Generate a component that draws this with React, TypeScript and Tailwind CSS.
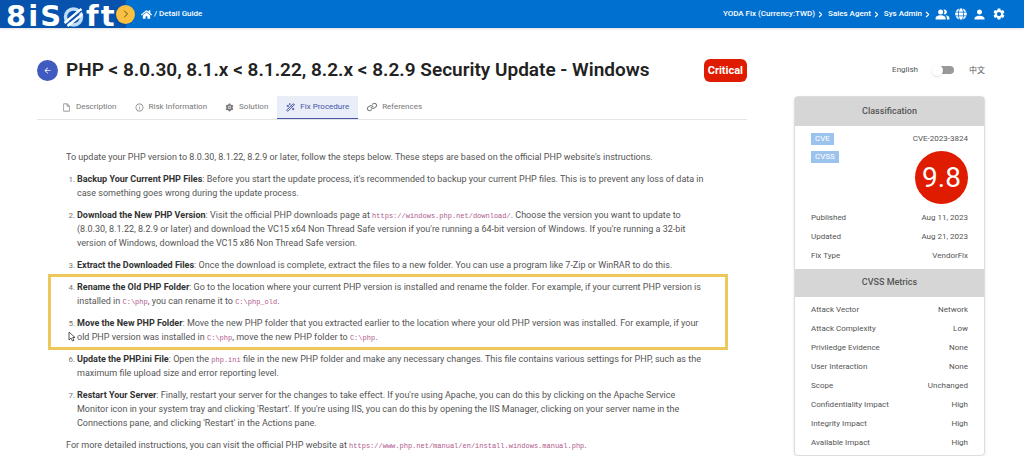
import { useState } from 'react';
import type { ReactNode } from 'react';
import { AiFillSetting, AiOutlineFile, AiOutlineInfoCircle } from 'react-icons/ai';
import { FaGlobe, FaHome } from 'react-icons/fa';
import { MdArrowBack, MdPeopleAlt, MdPerson, MdSettings } from 'react-icons/md';
import { ChevronRight, Link, WandSparkles } from 'lucide-react';

const tabs = [
  { label: 'Description', icon: <AiOutlineFile size={9} /> },
  { label: 'Risk Information', icon: <AiOutlineInfoCircle size={9} /> },
  { label: 'Solution', icon: <AiFillSetting size={9} /> },
  { label: 'Fix Procedure', icon: <WandSparkles size={9} strokeWidth={2.5} /> },
  { label: 'References', icon: <Link size={10} strokeWidth={2.5} className="rotate-12" /> },
];

const metrics = [
  ['Attack Vector', 'Network'],
  ['Attack Complexity', 'Low'],
  ['Priviledge Evidence', 'None'],
  ['User Interaction', 'None'],
  ['Scope', 'Unchanged'],
  ['Confidentiality Impact', 'High'],
  ['Integrity Impact', 'High'],
  ['Available Impact', 'High'],
];

function Code({ children }: { children: ReactNode }) {
  return <code className="font-['Liberation_Mono',monospace] text-[7px] leading-none text-[#b0588a]">{children}</code>;
}

function Step({ title, children }: { title: string; children: ReactNode }) {
  return (
    <li>
      <strong className="font-bold text-[#333]">{title}</strong>: {children}
    </li>
  );
}

function Logo() {
  return (
    <div className="flex items-center gap-[2px] pt-1 pl-1.5 font-['DejaVu_Sans',sans-serif] text-[29px] leading-6 font-bold text-white">
      <span>8</span>
      <span>i</span>
      <span>S</span>
      <svg width="21" height="20" viewBox="0 0 20 20" className="mt-0.5">
        <circle cx="10" cy="10" r="8" fill="none" stroke="#bcdcf7" strokeWidth="3.5" />
        <path d="M1 16 18 2M4 19 19 7" stroke="#fff" strokeWidth="2.5" />
        <path d="M2 18 18 4" stroke="#0b58b0" strokeWidth="1.2" />
      </svg>
      <span>f</span>
      <span>t</span>
    </div>
  );
}

function Header() {
  return (
    <header className="flex h-7 items-center bg-[#0070d0] text-[8px] font-medium text-white shadow">
      <div className="flex h-7 w-[126px] items-center bg-[#0752ac]">
        <Logo />
      </div>
      <button aria-label="Expand menu" className="z-10 -ml-[10px] flex size-[19px] items-center justify-center rounded-full bg-[#fbc040] text-[#5a4a20] shadow">
        <ChevronRight size={12} />
      </button>
      <nav className="ml-1.5 flex items-center gap-[2px]">
        <a href="#" aria-label="Home">
          <FaHome size={11} />
        </a>
        <span>/ Detail Guide</span>
      </nav>
      <div className="mr-[18px] ml-auto flex items-center gap-[3px]">
        {['YODA Fix (Currency:TWD)', 'Sales Agent', 'Sys Admin'].map((item) => (
          <button key={item} className="flex items-center gap-px">
            {item}
            <ChevronRight size={9} strokeWidth={3} />
          </button>
        ))}
        <div className="flex items-center gap-[5px]">
          <button aria-label="Users"><MdPeopleAlt size={15} /></button>
          <button aria-label="Language"><FaGlobe size={12} /></button>
          <button aria-label="Account"><MdPerson size={15} /></button>
          <button aria-label="Settings"><MdSettings size={14} /></button>
        </div>
      </div>
    </header>
  );
}

function Row({ label, value }: { label: string; value: string }) {
  return (
    <div className="flex h-[19px] items-center justify-between">
      <dt>{label}</dt>
      <dd>{value}</dd>
    </div>
  );
}

function Sidebar() {
  const [chinese, setChinese] = useState(false);

  return (
    <aside className="w-[191px] shrink-0 text-[8px] text-[#555]">
      <div className="flex h-6 items-center justify-end">
        <span>English</span>
        <label className="ml-[14px] flex cursor-pointer items-center">
          <input
            type="checkbox"
            role="switch"
            aria-label="Switch language"
            checked={chinese}
            onChange={(e) => setChinese(e.target.checked)}
            className="peer sr-only"
          />
          <span className="flex h-2 w-[22px] items-center rounded-full bg-linear-to-r from-transparent from-25% to-[#999] to-25% peer-checked:justify-end">
            <span className="size-[11px] rounded-full bg-white shadow" />
          </span>
        </label>
        <span className="ml-[15px] font-['Noto_Sans_CJK_TC',sans-serif]">中文</span>
      </div>

      <section className="mt-[14px] rounded-sm border border-[#ddd] shadow-sm">
        <h2 className="flex h-[29px] items-center justify-center bg-[#d6d6d6] text-[9px] font-medium">Classification</h2>
        <dl className="px-4 pt-[3px] pb-1">
          <div className="flex h-[19px] items-center justify-between">
            <dt className="bg-[#9cc3ee] px-1 leading-3 text-white">CVE</dt>
            <dd>CVE-2023-3824</dd>
          </div>
          <div className="flex items-start justify-between pt-[3px] pb-1">
            <dt className="bg-[#9cc3ee] px-1 leading-3 text-white">CVSS</dt>
            <dd className="flex size-[53px] items-center justify-center rounded-full bg-[#e01c00] text-[28px] text-white">9.8</dd>
          </div>
          <Row label="Published" value="Aug 11, 2023" />
          <Row label="Updated" value="Aug 21, 2023" />
          <Row label="Fix Type" value="VendorFix" />
        </dl>
        <h2 className="flex h-7 items-center justify-center bg-[#d6d6d6] text-[9px] font-medium">CVSS Metrics</h2>
        <dl className="px-4 py-[3px]">
          {metrics.map(([label, value]) => (
            <Row key={label} label={label} value={value} />
          ))}
        </dl>
      </section>
    </aside>
  );
}

function Procedure() {
  const list = 'list-decimal space-y-2 pl-[11px] marker:text-[8px] marker:text-[#777]';

  return (
    <article className="space-y-2 pr-10 pl-[29px] text-[9px] leading-[14px] text-[#555]">
      <p>
        To update your PHP version to 8.0.30, 8.1.22, 8.2.9 or later, follow the steps below. These steps are based on the
        official PHP website's instructions.
      </p>
      <ol className={list}>
        <Step title="Backup Your Current PHP Files">
          Before you start the update process, it's recommended to backup your current PHP files. This is to prevent any
          loss of data in case something goes wrong during the update process.
        </Step>
        <Step title="Download the New PHP Version">
          Visit the official PHP downloads page at <Code>https://windows.php.net/download/</Code>. Choose the version you
          want to update to (8.0.30, 8.1.22, 8.2.9 or later) and download the VC15 x64 Non Thread Safe version if you're
          running a 64-bit version of Windows. If you're running a 32-bit version of Windows, download the VC15 x86 Non
          Thread Safe version.
        </Step>
        <Step title="Extract the Downloaded Files">
          Once the download is complete, extract the files to a new folder. You can use a program like 7-Zip or WinRAR to
          do this.
        </Step>
      </ol>
      <div className="relative">
        <ol start={4} className={list}>
          <Step title="Rename the Old PHP Folder">
            Go to the location where your current PHP version is installed and rename the folder. For example, if your
            current PHP version is installed in <Code>C:\php</Code>, you can rename it to <Code>C:\php_old</Code>.
          </Step>
          <Step title="Move the New PHP Folder">
            Move the new PHP folder that you extracted earlier to the location where your old PHP version was installed.
            For example, if your old PHP version was installed in <Code>C:\php</Code>, move the new PHP folder to{' '}
            <Code>C:\php</Code>.
          </Step>
        </ol>
        <div className="pointer-events-none absolute -top-1.5 -right-[21px] -bottom-1.5 -left-[18px] border-3 border-[#edc75b]" />
        <svg width="8" height="11" viewBox="0 0 8 11" className="absolute bottom-0.5 left-0.5">
          <path d="M1 1v8l2-2 1.500 3 1.500-.7L4.700 6.500H7z" fill="#fff" stroke="#444" strokeWidth="0.9" />
        </svg>
      </div>
      <ol start={6} className={list}>
        <Step title="Update the PHP.ini File">
          Open the <Code>php.ini</Code> file in the new PHP folder and make any necessary changes. This file contains
          various settings for PHP, such as the maximum file upload size and error reporting level.
        </Step>
        <Step title="Restart Your Server">
          Finally, restart your server for the changes to take effect. If you're using Apache, you can do this by clicking
          on the Apache Service Monitor icon in your system tray and clicking 'Restart'. If you're using IIS, you can do
          this by opening the IIS Manager, clicking on your server name in the Connections pane, and clicking 'Restart' in
          the Actions pane.
        </Step>
      </ol>
      <p>
        For more detailed instructions, you can visit the official PHP website at{' '}
        <Code>https://www.php.net/manual/en/install.windows.manual.php</Code>.
      </p>
    </article>
  );
}

export default function App() {
  const [active, setActive] = useState('Fix Procedure');

  return (
    <div className="bg-white font-[Roboto,sans-serif]">
      <Header />
      <main className="flex gap-[47px] pt-[30px] pr-[39px] pl-[37px]">
        <div className="min-w-0 flex-1">
          <div className="flex h-6 items-center">
            <button aria-label="Back" className="flex size-[21px] items-center justify-center rounded-full bg-[#3f5bc0] text-white">
              <MdArrowBack size={9} />
            </button>
            <h1 className="ml-2 text-[19px] leading-6 font-semibold text-[#222]">
              PHP &lt; 8.0.30, 8.1.x &lt; 8.1.22, 8.2.x &lt; 8.2.9 Security Update - Windows
            </h1>
            <span className="ml-auto rounded-md bg-[#e01c00] px-1 text-[11px] leading-[23px] font-bold text-white">Critical</span>
          </div>
          <div role="tablist" className="mt-[14px] flex border-b border-[#e5e5e5] pl-4">
            {tabs.map(({ label, icon }) => (
              <button
                key={label}
                role="tab"
                aria-selected={active === label}
                onClick={() => setActive(label)}
                className={`flex h-[23px] items-center gap-[5px] border-b px-[9px] text-[8px] ${
                  active === label ? 'border-[#4356a8] bg-[#e9edf7] text-[#4356a8]' : 'border-transparent text-[#777]'
                }`}
              >
                {icon}
                {label}
              </button>
            ))}
          </div>
          <div className="pt-[30px]">
            <Procedure />
          </div>
        </div>
        <Sidebar />
      </main>
    </div>
  );
}
